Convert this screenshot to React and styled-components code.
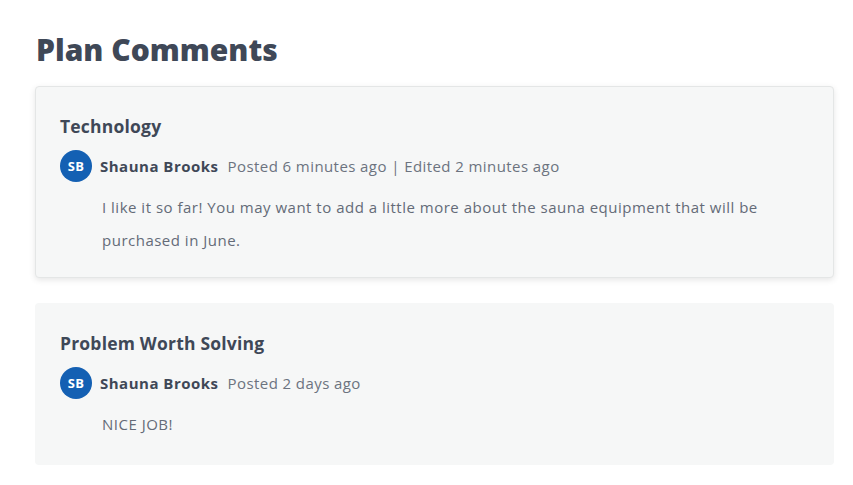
import React from "react";
import styled, { createGlobalStyle } from "styled-components";

const Global = createGlobalStyle`
  html, body { margin: 0; padding: 0; background: #ffffff; }
  body { font-family: "Open Sans", "Noto Sans", sans-serif; }
`;

const Page = styled.main`
  padding: 30px 19px 20px 35px;
  display: flex;
  flex-direction: column;
`;

const Heading = styled.h1`
  margin: 0 0 16px 1px;
  font-size: 30px;
  line-height: 40px;
  font-weight: 800;
  color: #3f4857;
`;

const List = styled.div`
  display: flex;
  flex-direction: column;
  gap: 25px;
`;

const Card = styled.section`
  background: #f6f7f7;
  border: 1px solid ${(p) => (p.$raised ? "#e4e6e6" : "transparent")};
  border-radius: 4px;
  box-shadow: ${(p) => (p.$raised ? "0 2px 6px rgba(0,0,0,0.10)" : "none")};
  padding: 27px 24px ${(p) => (p.$raised ? "20px" : "23px")} 24px;
`;

const Section = styled.h2`
  margin: 0 0 12px 0;
  font-size: 17.5px;
  line-height: 24px;
  font-weight: 700;
  letter-spacing: 0.2px;
  color: #3f4857;
`;

const Author = styled.div`
  display: flex;
  align-items: center;
  gap: 8px;
  height: 32px;
`;

const Avatar = styled.div`
  width: 32px;
  height: 32px;
  border-radius: 50%;
  background: #1460b3;
  color: #ffffff;
  display: flex;
  align-items: center;
  justify-content: center;
  font-size: 13px;
  font-weight: 700;
  letter-spacing: 0.4px;
  flex-shrink: 0;
`;

const Name = styled.span`
  font-size: 15px;
  font-weight: 700;
  letter-spacing: 0.5px;
  color: #3f4857;
`;

const Meta = styled.span`
  font-size: 15px;
  letter-spacing: 0.42px;
  color: #6c737f;
  margin-left: 1px;
`;

const Body = styled.p`
  margin: 9px 0 0 42px;
  font-size: 15px;
  line-height: 33px;
  letter-spacing: 0.5px;
  color: #646b78;
`;

const comments = [
  {
    section: "Technology",
    initials: "SB",
    name: "Shauna Brooks",
    meta: "Posted 6 minutes ago | Edited 2 minutes ago",
    body:
      "I like it so far! You may want to add a little more about the sauna equipment that will be purchased in June.",
    raised: true,
  },
  {
    section: "Problem Worth Solving",
    initials: "SB",
    name: "Shauna Brooks",
    meta: "Posted 2 days ago",
    body: "NICE JOB!",
    raised: false,
  },
];

export default function App() {
  return (
    <>
      <Global />
      <Page>
        <Heading>Plan Comments</Heading>
        <List>
          {comments.map((c, i) => (
            <Card key={i} $raised={c.raised}>
              <Section>{c.section}</Section>
              <Author>
                <Avatar>{c.initials}</Avatar>
                <Name>{c.name}</Name>
                <Meta>{c.meta}</Meta>
              </Author>
              <Body>{c.body}</Body>
            </Card>
          ))}
        </List>
      </Page>
    </>
  );
}
